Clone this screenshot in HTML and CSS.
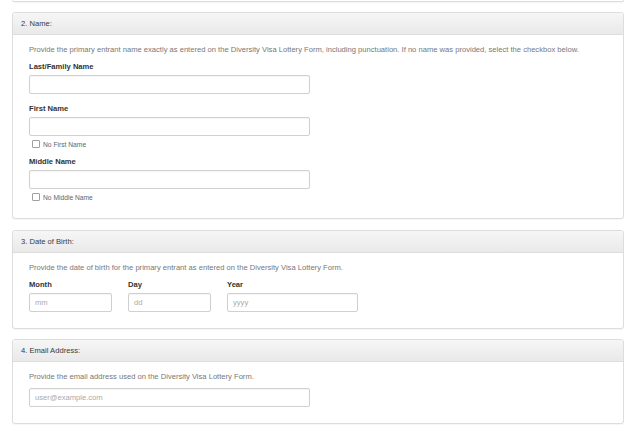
FILE: index.html
```html
<!DOCTYPE html>
<html lang="en">
<head>
<meta charset="utf-8">
<title>Entrant Status Check</title>
<link rel="stylesheet" href="styles.css">
</head>
<body>
<div class="page">
  <div class="panel panel-stub"></div>

  <section class="panel">
    <div class="panel-heading">2. Name:</div>
    <div class="panel-body">
      <p class="desc">Provide the primary entrant name exactly as entered on the Diversity Visa Lottery Form, including punctuation. If no name was provided, select the checkbox below.</p>
      <div class="group">
        <label class="field-label" for="last">Last/Family Name</label>
        <input class="text-input wide" id="last" type="text">
      </div>
      <div class="group">
        <label class="field-label" for="first">First Name</label>
        <input class="text-input wide" id="first" type="text">
        <label class="check-row"><input class="check" type="checkbox"><span>No First Name</span></label>
      </div>
      <div class="group group-tight">
        <label class="field-label" for="middle">Middle Name</label>
        <input class="text-input wide" id="middle" type="text">
        <label class="check-row"><input class="check" type="checkbox"><span>No Middle Name</span></label>
      </div>
    </div>
  </section>

  <section class="panel panel-dob">
    <div class="panel-heading">3. Date of Birth:</div>
    <div class="panel-body">
      <p class="desc">Provide the date of birth for the primary entrant as entered on the Diversity Visa Lottery Form.</p>
      <div class="date-grid">
        <div>
          <label class="field-label" for="mm">Month</label>
          <input class="text-input" id="mm" type="text" placeholder="mm">
        </div>
        <div>
          <label class="field-label" for="dd">Day</label>
          <input class="text-input" id="dd" type="text" placeholder="dd">
        </div>
        <div>
          <label class="field-label" for="yy">Year</label>
          <input class="text-input" id="yy" type="text" placeholder="yyyy">
        </div>
      </div>
    </div>
  </section>

  <section class="panel">
    <div class="panel-heading">4. Email Address:</div>
    <div class="panel-body">
      <p class="desc">Provide the email address used on the Diversity Visa Lottery Form.</p>
      <input class="text-input wide" type="text" placeholder="user@example.com">
    </div>
  </section>
</div>
</body>
</html>
```

FILE: styles.css
```css
html, body {
  margin: 0;
  padding: 0;
  background: #ffffff;
}

body {
  font-family: "Liberation Sans", Arial, sans-serif;
  font-size: 7.6px;
  color: #333333;
}

.page {
  margin-left: 12px;
  width: 612px;
}

.panel {
  border: 1px solid #dddddd;
  border-radius: 3px;
  background: #ffffff;
  margin-bottom: 11px;
  box-shadow: 0 1px 1px rgba(0, 0, 0, 0.04);
}

.panel-stub {
  height: 1px;
  border-top: 0;
  border-radius: 0 0 3px 3px;
  margin-bottom: 10px;
}

.panel-dob {
  margin-bottom: 10px;
}

.panel-heading {
  height: 21px;
  line-height: 21px;
  padding-left: 8px;
  border-bottom: 1px solid #dddddd;
  border-radius: 3px 3px 0 0;
  background: linear-gradient(to bottom, #f6f6f6 0%, #e9e9e9 100%);
  color: #3a3a3a;
}

.panel-body {
  padding: 9px 16px 16px;
}

.desc {
  margin: 0 0 5px;
  line-height: 12px;
  color: #777777;
}

.field-label {
  display: block;
  line-height: 12px;
  margin-bottom: 2px;
  font-weight: bold;
  color: #333333;
}

.group + .group {
  margin-top: 9px;
}

.group-tight {
  margin-top: 7px !important;
}

.text-input {
  display: block;
  box-sizing: border-box;
  width: 100%;
  height: 19px;
  margin: 0;
  padding: 0 5px;
  border: 1px solid #d0d0d0;
  border-radius: 2px;
  background: #ffffff;
  font-family: inherit;
  font-size: 7.6px;
  color: #555555;
  box-shadow: inset 0 1px 1px rgba(0, 0, 0, 0.04);
}

.text-input::placeholder {
  color: #aaaaaa;
}

.wide {
  width: 281px;
}

.check-row {
  display: flex;
  align-items: center;
  height: 10px;
  margin-top: 3px;
  padding-left: 3px;
  font-size: 6.7px;
  color: #666666;
}

.check {
  appearance: none;
  -webkit-appearance: none;
  box-sizing: border-box;
  width: 8px;
  height: 8px;
  margin: 0 3px 0 0;
  border: 1px solid #a0a0a0;
  border-radius: 1px;
  background: #ffffff;
}

.date-grid {
  display: grid;
  grid-template-columns: 83px 83px 131px;
  column-gap: 16px;
}
```
